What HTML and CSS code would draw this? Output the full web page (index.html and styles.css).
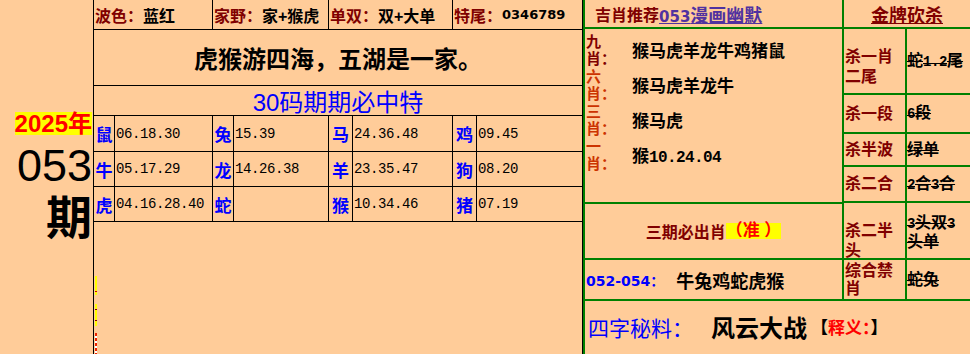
FILE: index.html
```html
<!DOCTYPE html>
<html lang="zh-CN">
<head>
<meta charset="utf-8">
<title>053期</title>
<link rel="stylesheet" href="styles.css">
</head>
<body>
<div class="page">
  <div class="left">
    <div class="year">2025年</div>
    <div class="issue">053</div>
    <div class="qi">期</div>
  </div>

  <div class="mid">
    <div class="r1">
      <div class="c"><span class="lb">波色：</span>蓝红</div>
      <div class="c"><span class="lb">家野：</span>家+猴虎</div>
      <div class="c"><span class="lb">单双：</span>双+大单</div>
      <div class="c"><span class="lb">特尾：</span><span class="tah">0346789</span></div>
    </div>
    <div class="slogan">虎猴游四海，五湖是一家。</div>
    <div class="title30">30码期期必中特</div>
    <div class="grid">
      <div class="z">鼠</div><div class="n">06.18.30</div>
      <div class="z">兔</div><div class="n">15.39</div>
      <div class="z">马</div><div class="n">24.36.48</div>
      <div class="z">鸡</div><div class="n">09.45</div>
      <div class="z">牛</div><div class="n">05.17.29</div>
      <div class="z">龙</div><div class="n">14.26.38</div>
      <div class="z">羊</div><div class="n">23.35.47</div>
      <div class="z">狗</div><div class="n">08.20</div>
      <div class="z">虎</div><div class="n">04.16.28.40</div>
      <div class="z">蛇</div><div class="n"></div>
      <div class="z">猴</div><div class="n">10.34.46</div>
      <div class="z">猪</div><div class="n">07.19</div>
    </div>
    <div class="slivers">
      <div class="sv1"></div>
      <div class="sv2"></div>
      <div class="sv3"></div>
    </div>
  </div>

  <div class="right">
    <div class="rtop">
      <div class="rmain">
        <div class="rhead">吉肖推荐<a class="link" href="#"><span class="tah14">053</span>漫画幽默</a></div>
        <div class="xiao">
          <div class="xrow"><div class="xl dark">九<br>肖：</div><div class="xv">猴马虎羊龙牛鸡猪鼠</div></div>
          <div class="xrow"><div class="xl orange">六<br>肖：</div><div class="xv">猴马虎羊龙牛</div></div>
          <div class="xrow"><div class="xl orange">三<br>肖：</div><div class="xv">猴马虎</div></div>
          <div class="xrow"><div class="xl orange">一<br>肖：</div><div class="xv">猴<span class="mono">10.24.04</span></div></div>
        </div>
        <div class="sanqi">三期必出肖<span class="zhun">（准 ）</span></div>
        <div class="range"><span class="rg">052-054：</span><span class="rz">牛兔鸡蛇虎猴</span></div>
      </div>
      <div class="rside">
        <div class="shead"><span class="shead-t">金牌砍杀</span></div>
        <div class="srow s1"><div class="sl">杀一肖二尾</div><div class="sval"><span class="del">蛇<span class="mono2">1.2</span>尾</span></div></div>
        <div class="srow s2"><div class="sl">杀一段</div><div class="sval"><span class="del"><span class="mono2">6</span>段</span></div></div>
        <div class="srow s3"><div class="sl">杀半波</div><div class="sval"><span class="del">绿单</span></div></div>
        <div class="srow s4"><div class="sl">杀二合</div><div class="sval"><span class="del"><span class="mono2">2</span>合<span class="mono2">3</span>合</span></div></div>
        <div class="srow s5"><div class="sl">杀二半头</div><div class="sval"><span class="del"><span class="mono2">3</span>头双<span class="mono2">3</span><br>头单</span></div></div>
        <div class="srow s6"><div class="sl">综合禁肖</div><div class="sval"><span class="del">蛇兔</span></div></div>
      </div>
    </div>
    <div class="mishu">
      <span class="ms1">四字秘料：</span><span class="ms2">风云大战</span><span class="ms3">【<span class="red">释义：</span>】</span>
    </div>
  </div>
</div>
</body>
</html>
```

FILE: styles.css
```css
html, body {
  margin: 0;
  padding: 0;
  background: #FFCC99;
}

.page {
  display: flex;
  width: 970px;
  height: 354px;
  overflow: hidden;
  background: #FFCC99;
  color: #000;
  font-family: "Liberation Sans", "Noto Sans CJK SC", sans-serif;
}

/* ---------- left column ---------- */
.left {
  width: 93px;
  flex: none;
  box-sizing: border-box;
  padding-right: 1px;
  display: flex;
  flex-direction: column;
  align-items: flex-end;
  justify-content: center;
}

.year {
  font-size: 24px;
  font-weight: bold;
  color: #FF0000;
  background: #FFFF00;
  line-height: 23px;
  height: 23px;
  white-space: nowrap;
}

.issue {
  font-size: 45px;
  line-height: 46px;
  margin-top: 8px;
}

.qi {
  font-size: 46px;
  font-weight: bold;
  line-height: 50px;
  margin-top: 4px;
}

/* ---------- middle column ---------- */
.mid {
  width: 490px;
  flex: none;
  box-sizing: border-box;
  border-left: 1px solid #000;
  border-right: 1px solid #000;
  display: flex;
  flex-direction: column;
  overflow: hidden;
}

.r1 {
  display: grid;
  grid-template-columns: 119px 116px 124px 1fr;
  height: 30px;
  flex: none;
  box-sizing: border-box;
  border-bottom: 1px solid #000;
}

.r1 .c {
  border-right: 1px solid #000;
  display: flex;
  align-items: center;
  padding-left: 1px;
  font-size: 16px;
  font-weight: bold;
  white-space: nowrap;
}

.r1 .c:last-child {
  border-right: none;
}

.lb {
  color: #800000;
}

.tah {
  font-family: "DejaVu Sans", sans-serif;
  font-size: 13px;
  font-weight: bold;
}

.slogan {
  height: 56px;
  flex: none;
  box-sizing: border-box;
  border-bottom: 1px solid #000;
  display: flex;
  align-items: center;
  justify-content: center;
  font-size: 24px;
  font-weight: bold;
}

.title30 {
  height: 30px;
  flex: none;
  box-sizing: border-box;
  border-bottom: 1px solid #000;
  display: flex;
  align-items: center;
  justify-content: center;
  font-size: 24px;
  color: #0000FF;
}

.grid {
  flex: none;
  display: grid;
  grid-template-columns: 21px 98px 21px 95px 24px 100px 24px 105px;
  grid-template-rows: 36px 35px 35px;
}

.grid > div {
  box-sizing: border-box;
  border-right: 1px solid #000;
  border-bottom: 1px solid #000;
  display: flex;
  align-items: center;
}

.grid > div:nth-child(8n) {
  border-right: none;
}

.z {
  color: #0000FF;
  font-size: 17px;
  font-weight: bold;
  justify-content: center;
}

.n {
  font-family: "Liberation Mono", monospace;
  font-size: 14px;
  letter-spacing: -0.4px;
  padding-left: 1px;
}

.slivers {
  flex: 1;
  min-height: 0;
  display: flex;
  flex-direction: column;
  padding-top: 54px;
  padding-left: 1px;
}

.sv1 {
  flex: none;
  width: 2px;
  height: 19px;
  background: linear-gradient(#FFFF00 0 15px, #CC0000 15px 16px, #FFFF00 16px);
}

.sv2 {
  flex: none;
  width: 2px;
  height: 22px;
  margin-top: 9px;
  background: linear-gradient(#FFFF00 0 5px, #880000 5px 6px, #FFFF00 6px 16px, #880000 16px 17px, #FFFF00 17px);
}

.sv3 {
  flex: none;
  width: 2px;
  height: 24px;
  margin-top: 7px;
  background: repeating-linear-gradient(#EE2200 0 3px, #FFFFFF 3px 5px);
}

/* ---------- right column ---------- */
.right {
  flex: 1;
  min-width: 0;
  border-left: 2px solid #008000;
  display: flex;
  flex-direction: column;
}

.rtop {
  display: flex;
  flex: none;
  height: 301px;
  box-sizing: border-box;
  border-bottom: 2px solid #008000;
}

.rmain {
  width: 259px;
  flex: none;
  box-sizing: border-box;
  border-right: 2px solid #008000;
  display: flex;
  flex-direction: column;
}

.rhead {
  height: 29px;
  flex: none;
  box-sizing: border-box;
  border-bottom: 2px solid #008000;
  display: flex;
  align-items: center;
  padding-left: 10px;
  font-size: 16px;
  font-weight: bold;
  color: #800000;
  white-space: nowrap;
}

.link {
  color: #5032A0;
  text-decoration: underline;
  font-size: 18px;
}

.tah14 {
  font-family: "DejaVu Sans", sans-serif;
  font-size: 15px;
}

.xiao {
  height: 175px;
  flex: none;
  box-sizing: border-box;
  border-bottom: 2px solid #008000;
  padding-top: 3px;
}

.xrow {
  display: flex;
  align-items: center;
  height: 35px;
}

.xl {
  width: 46px;
  flex: none;
  padding-left: 1px;
  font-size: 15px;
  line-height: 17px;
  font-weight: bold;
}

.xl.dark {
  color: #800000;
}

.xl.orange {
  color: #CC3300;
}

.xv {
  font-size: 17px;
  font-weight: bold;
  white-space: nowrap;
}

.mono {
  font-family: "Liberation Mono", monospace;
  font-size: 16px;
  letter-spacing: -0.6px;
}

.sanqi {
  height: 56px;
  flex: none;
  box-sizing: border-box;
  border-bottom: 2px solid #008000;
  display: flex;
  align-items: center;
  justify-content: center;
  font-size: 16px;
  font-weight: bold;
  color: #800000;
  white-space: pre;
}

.zhun {
  display: inline-block;
  color: #FF0000;
  background: #FFFF00;
  line-height: 16px;
  font-size: 17px;
  white-space: pre;
}

.range {
  flex: 1;
  display: flex;
  align-items: center;
  padding-left: 1px;
  white-space: nowrap;
}

.rg {
  color: #0000FF;
  font-family: "DejaVu Sans", "Noto Sans CJK SC", sans-serif;
  font-size: 14px;
  font-weight: bold;
}

.rz {
  font-size: 18px;
  font-weight: bold;
  margin-left: 12px;
}

.rside {
  flex: 1;
  min-width: 0;
  display: flex;
  flex-direction: column;
}

.shead {
  height: 29px;
  flex: none;
  box-sizing: border-box;
  border-bottom: 2px solid #008000;
  display: flex;
  align-items: center;
  justify-content: center;
}

.shead-t {
  font-size: 18px;
  font-weight: bold;
  color: #800000;
  text-decoration: underline;
}

.srow {
  display: grid;
  grid-template-columns: 63px 1fr;
  box-sizing: border-box;
  border-bottom: 2px solid #008000;
  flex: none;
}

.srow.s1 { height: 66px; }
.srow.s2 { height: 39px; }
.srow.s3 { height: 33px; }
.srow.s4 { height: 36px; }
.srow.s5 { height: 57px; }
.srow.s6 { height: 39px; border-bottom: none; }

.sl {
  box-sizing: border-box;
  border-right: 2px solid #008000;
  display: flex;
  align-items: center;
  padding-left: 1px;
  font-size: 16px;
  line-height: 20px;
  font-weight: bold;
  color: #800000;
}

.s1 .sl {
  padding-top: 12px;
}

.s5 .sl {
  padding-top: 18px;
}

.s6 .sl {
  line-height: 18px;
}

.sval {
  display: flex;
  align-items: center;
  font-size: 16px;
  line-height: 20px;
  font-weight: bold;
}

.s5 .sval {
  line-height: 18px;
}

.del {
  text-decoration: line-through;
}

.mono2 {
  font-family: "Liberation Mono", monospace;
  font-size: 14px;
  letter-spacing: -0.4px;
}

.mishu {
  flex: 1;
  display: flex;
  align-items: center;
  padding-left: 3px;
  padding-bottom: 2px;
  white-space: nowrap;
}

.ms1 {
  color: #0000FF;
  font-size: 21px;
}

.ms2 {
  font-size: 24px;
  font-weight: bold;
  margin-left: 18px;
}

.ms3 {
  font-size: 17px;
  font-weight: bold;
  margin-left: 4px;
}

.red {
  color: #FF0000;
}
```
